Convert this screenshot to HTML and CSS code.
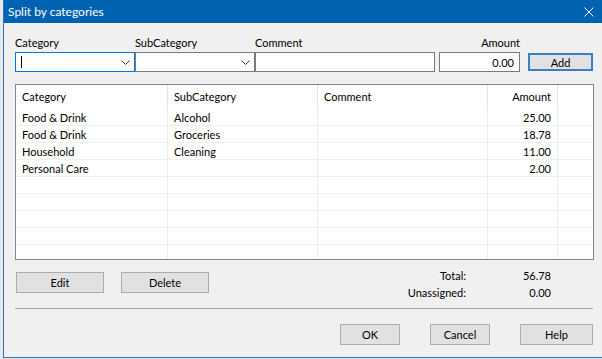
FILE: index.html
```html
<!DOCTYPE html>
<html lang="en">
<head>
  <meta charset="UTF-8" />
  <title>Split by categories</title>
  <link rel="stylesheet" href="styles.css">
</head>
<body>
  <div class="dialog">
    <div class="titlebar">
      <span class="title">Split by categories</span>
      <span class="close">
        <svg width="10" height="10" viewBox="0 0 10 10"><path d="M0.5 0.5 L9.5 9.5 M9.5 0.5 L0.5 9.5" stroke="#fff" stroke-width="1" fill="none"/></svg>
      </span>
    </div>

    <div class="client">
      <div class="entry-row">
        <div class="field f-cat">
          <label>Category</label>
          <div class="combo focused">
            <span class="caret"></span>
            <svg class="chev" width="9" height="5" viewBox="0 0 9 5"><polyline points="0.5,0.5 4.5,4.5 8.5,0.5" stroke="#333" fill="none"/></svg>
          </div>
        </div>
        <div class="field f-sub">
          <label>SubCategory</label>
          <div class="combo">
            <svg class="chev" width="9" height="5" viewBox="0 0 9 5"><polyline points="0.5,0.5 4.5,4.5 8.5,0.5" stroke="#333" fill="none"/></svg>
          </div>
        </div>
        <div class="field f-comment">
          <label>Comment</label>
          <div class="textbox"></div>
        </div>
        <div class="field f-amount">
          <label>Amount</label>
          <div class="textbox num">0.00</div>
        </div>
        <button class="button default add">Add</button>
      </div>

      <div class="listview">
        <div class="lv-row lv-head">
          <div class="cell">Category</div>
          <div class="cell">SubCategory</div>
          <div class="cell">Comment</div>
          <div class="cell num">Amount</div>
          <div class="cell"></div>
        </div>
        <div class="lv-row">
          <div class="cell">Food &amp; Drink</div>
          <div class="cell">Alcohol</div>
          <div class="cell"></div>
          <div class="cell num">25.00</div>
          <div class="cell"></div>
        </div>
        <div class="lv-row">
          <div class="cell">Food &amp; Drink</div>
          <div class="cell">Groceries</div>
          <div class="cell"></div>
          <div class="cell num">18.78</div>
          <div class="cell"></div>
        </div>
        <div class="lv-row">
          <div class="cell">Household</div>
          <div class="cell">Cleaning</div>
          <div class="cell"></div>
          <div class="cell num">11.00</div>
          <div class="cell"></div>
        </div>
        <div class="lv-row">
          <div class="cell">Personal Care</div>
          <div class="cell"></div>
          <div class="cell"></div>
          <div class="cell num">2.00</div>
          <div class="cell"></div>
        </div>
        <div class="lv-row"><div class="cell"></div><div class="cell"></div><div class="cell"></div><div class="cell"></div><div class="cell"></div></div>
        <div class="lv-row"><div class="cell"></div><div class="cell"></div><div class="cell"></div><div class="cell"></div><div class="cell"></div></div>
        <div class="lv-row"><div class="cell"></div><div class="cell"></div><div class="cell"></div><div class="cell"></div><div class="cell"></div></div>
        <div class="lv-row"><div class="cell"></div><div class="cell"></div><div class="cell"></div><div class="cell"></div><div class="cell"></div></div>
        <div class="lv-row"><div class="cell"></div><div class="cell"></div><div class="cell"></div><div class="cell"></div><div class="cell"></div></div>
      </div>

      <div class="below-list">
        <div class="actions">
          <button class="button wide">Edit</button>
          <button class="button wide">Delete</button>
        </div>
        <div class="totals">
          <span class="t-label">Total:</span><span class="t-value">56.78</span>
          <span class="t-label">Unassigned:</span><span class="t-value">0.00</span>
        </div>
      </div>

      <div class="separator"></div>

      <div class="footer">
        <button class="button ok">OK</button>
        <button class="button ok">Cancel</button>
        <button class="button help">Help</button>
      </div>
    </div>
  </div>
</body>
</html>
```

FILE: styles.css
```css
html, body {
  margin: 0;
  padding: 0;
}
body {
  width: 602px;
  height: 359px;
  overflow: hidden;
  background: #e8e8e8;
  font-family: Lato, "Noto Sans", sans-serif;
  font-size: 11px;
  color: #000;
}
.dialog {
  margin-left: 3px;
  width: 608px;
  height: 357px;
  background: #f0f0f0;
  border-left: 1px solid #2a76bb;
  border-bottom: 1px solid #2a76bb;
}
.titlebar {
  height: 23px;
  background: #0063b1;
  color: #fff;
  display: flex;
  align-items: center;
  padding-left: 4px;
  font-size: 12px;
}
.close {
  margin-left: auto;
  width: 46px;
  height: 23px;
  display: flex;
  align-items: center;
  justify-content: center;
}
.client {
  width: 578px;
  padding-left: 11px;
}

/* entry row */
.entry-row {
  display: flex;
  align-items: flex-end;
  padding-top: 12px;
}
.field {
  display: flex;
  flex-direction: column;
}
.field label {
  line-height: 15px;
  margin-bottom: 2px;
}
.f-cat, .f-sub { width: 120px; }
.f-comment { width: 180px; }
.f-amount {
  width: 81px;
  margin-left: 4px;
  text-align: right;
}
.combo, .textbox {
  box-sizing: border-box;
  height: 20px;
  border: 1px solid #7a7a7a;
  background: #fff;
  display: flex;
  align-items: center;
}
.combo.focused {
  border-color: #0078d7;
}
.caret {
  width: 1px;
  height: 12px;
  background: #000;
  margin-left: 5px;
}
.chev {
  margin-left: auto;
  margin-right: 4px;
}
.textbox.num {
  justify-content: flex-end;
  padding-right: 5px;
}

/* buttons */
.button {
  box-sizing: border-box;
  height: 21px;
  padding: 0;
  background: #e1e1e1;
  border: 1px solid #adadad;
  font-family: inherit;
  font-size: 11px;
  color: #000;
}
.button.default {
  border: 2px solid #3a7fc3;
}
.add {
  width: 65px;
  height: 18px;
  margin-left: 8px;
  margin-bottom: 1px;
}
.wide { width: 88px; }
.ok { width: 60px; }
.help { width: 73px; }

/* list */
.listview {
  box-sizing: border-box;
  width: 579px;
  height: 176px;
  margin-top: 12px;
  background: #fff;
  border: 1px solid #828790;
  overflow: hidden;
}
.lv-row {
  display: grid;
  grid-template-columns: 152px 150px 170px 70px 1fr;
  height: 17px;
  box-sizing: border-box;
  border-bottom: 1px solid #f0f0f0;
  line-height: 17px;
}
.lv-head {
  height: 24px;
  line-height: 24px;
  border-bottom: none;
}
.cell {
  border-right: 1px solid #ececec;
  padding: 0 6px 0 6px;
  white-space: nowrap;
}
.lv-head .cell {
  border-right-color: #e5e5e5;
}
.cell:last-child {
  border-right: none;
}
.cell.num {
  text-align: right;
}

/* below list */
.below-list {
  display: flex;
  align-items: flex-start;
  height: 48px;
}
.actions {
  display: flex;
  gap: 17px;
  margin-top: 12px;
  margin-left: 1px;
}
.totals {
  margin-left: auto;
  margin-right: 42px;
  margin-top: 7px;
  display: grid;
  grid-template-columns: auto 85px;
  line-height: 17px;
  text-align: right;
}
.separator {
  border-top: 1px solid #a0a0a0;
}
.footer {
  display: flex;
  justify-content: flex-end;
  gap: 30px;
  margin-top: 15px;
}
```
